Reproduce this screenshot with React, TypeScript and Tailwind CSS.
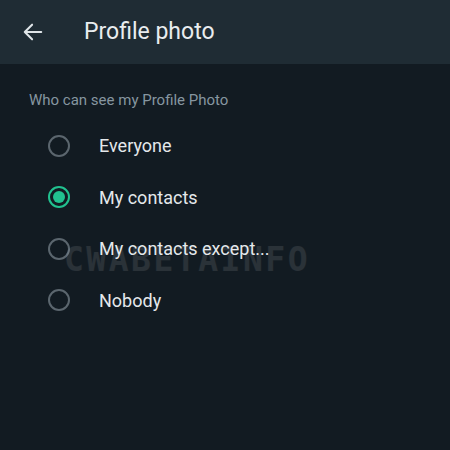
import React from "react";

const options = ["Everyone", "My contacts", "My contacts except...", "Nobody"];

const Radio = ({ checked }: { checked: boolean }) => (
  <div
    className={`w-[22px] h-[22px] rounded-full border-2 flex items-center justify-center ${
      checked ? "border-[#21c18f]" : "border-[#5b666e]"
    }`}
  >
    {checked && <div className="w-[12px] h-[12px] rounded-full bg-[#21c18f]" />}
  </div>
);

export default function App() {
  return (
    <div
      className="relative w-[450px] h-[450px] bg-[#121b22] overflow-hidden"
      style={{ fontFamily: "Roboto, 'Liberation Sans', sans-serif" }}
    >
      {/* header */}
      <div className="h-[64px] bg-[#1f2c34] flex items-center">
        <svg
          className="ml-[22px]"
          width="22"
          height="22"
          viewBox="0 0 24 24"
          fill="none"
          stroke="#dfe5e8"
          strokeWidth="2.2"
          strokeLinecap="round"
          strokeLinejoin="round"
        >
          <path d="M21 12H3M11 4l-8 8 8 8" />
        </svg>
        <span className="ml-[40px] text-[23px] text-[#e9edef]">Profile photo</span>
      </div>

      <div className="pl-[29px] pt-[25px] text-[15px] text-[#8696a0]">
        Who can see my Profile Photo
      </div>

      <div className="mt-[8.5px] flex flex-col">
        {options.map((o, i) => (
          <div key={o} className="h-[51.5px] flex items-center pl-[48px]">
            <Radio checked={i === 1} />
            <span className="ml-[29px] text-[18px] text-[#e4e8eb]">{o}</span>
          </div>
        ))}
      </div>

      {/* watermark */}
      <div
        className="absolute left-[64px] top-[235px] text-[33px] font-bold tracking-[2.5px] text-white/10 select-none"
        style={{ fontFamily: "'DejaVu Sans Mono', monospace" }}
      >
        CWABETAINFO
      </div>
    </div>
  );
}
